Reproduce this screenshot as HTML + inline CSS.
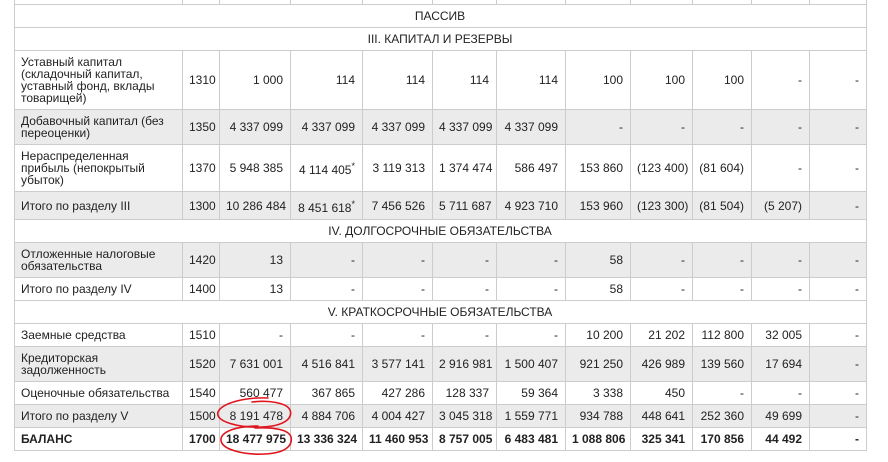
<!DOCTYPE html>
<html><head><meta charset="utf-8"><style>
body{margin:0;background:#fff;width:888px;height:462px;overflow:hidden;position:relative;font-family:"Liberation Sans",Arial,sans-serif;font-size:12px;color:#222}
table{position:absolute;left:14px;top:-20px;border-collapse:collapse;table-layout:fixed;width:853px}
td{border:1px solid #ccc;padding:0 7px 0 6px;text-align:right;line-height:12px;vertical-align:middle;overflow:hidden;white-space:nowrap}
td:first-child{text-align:left;white-space:normal;padding-left:6px}
td.c{text-align:center}
td.h{text-align:center}
tr.g td{background:#ebebeb}
tr.b td{font-weight:bold}
sup{font-size:9px;line-height:0}
td.s{padding-top:4px}
</style></head><body>
<table>
<colgroup><col style="width:168px"><col style="width:37px"><col style="width:71px"><col style="width:72px"><col style="width:70px"><col style="width:64px"><col style="width:69px"><col style="width:65px"><col style="width:62px"><col style="width:59px"><col style="width:58px"><col style="width:57px"></colgroup>
<tr style="height:24px"><td></td><td></td><td></td><td></td><td></td><td></td><td></td><td></td><td></td><td></td><td></td><td></td></tr>
<tr style="height:23px"><td colspan="12" class="h">ПАССИВ</td></tr>
<tr style="height:23px"><td colspan="12" class="h">III. КАПИТАЛ И РЕЗЕРВЫ</td></tr>
<tr style="height:59px"><td>Уставный капитал (складочный капитал, уставный фонд, вклады товарищей)</td><td>1310</td><td>1 000</td><td>114</td><td>114</td><td>114</td><td>114</td><td>100</td><td>100</td><td>100</td><td>-</td><td>-</td></tr>
<tr class="g" style="height:35px"><td>Добавочный капитал (без переоценки)</td><td>1350</td><td>4 337 099</td><td>4 337 099</td><td>4 337 099</td><td>4 337 099</td><td>4 337 099</td><td>-</td><td>-</td><td>-</td><td>-</td><td>-</td></tr>
<tr style="height:47px"><td>Нераспределенная прибыль (непокрытый убыток)</td><td>1370</td><td>5 948 385</td><td class="s">4 114 405<sup>*</sup></td><td>3 119 313</td><td>1 374 474</td><td>586 497</td><td>153 860</td><td>(123 400)</td><td>(81 604)</td><td>-</td><td>-</td></tr>
<tr class="g" style="height:28px"><td>Итого по разделу III</td><td>1300</td><td>10 286 484</td><td class="s">8 451 618<sup>*</sup></td><td>7 456 526</td><td>5 711 687</td><td>4 923 710</td><td>153 960</td><td>(123 300)</td><td>(81 504)</td><td>(5 207)</td><td>-</td></tr>
<tr style="height:23px"><td colspan="12" class="h">IV. ДОЛГОСРОЧНЫЕ ОБЯЗАТЕЛЬСТВА</td></tr>
<tr class="g" style="height:35px"><td>Отложенные налоговые обязательства</td><td>1420</td><td>13</td><td>-</td><td>-</td><td>-</td><td>-</td><td>58</td><td>-</td><td>-</td><td>-</td><td>-</td></tr>
<tr style="height:23px"><td>Итого по разделу IV</td><td>1400</td><td>13</td><td>-</td><td>-</td><td>-</td><td>-</td><td>58</td><td>-</td><td>-</td><td>-</td><td>-</td></tr>
<tr style="height:23px"><td colspan="12" class="h">V. КРАТКОСРОЧНЫЕ ОБЯЗАТЕЛЬСТВА</td></tr>
<tr style="height:23px"><td>Заемные средства</td><td>1510</td><td>-</td><td>-</td><td>-</td><td>-</td><td>-</td><td>10 200</td><td>21 202</td><td>112 800</td><td>32 005</td><td>-</td></tr>
<tr class="g" style="height:35px"><td>Кредиторская задолженность</td><td>1520</td><td>7 631 001</td><td>4 516 841</td><td>3 577 141</td><td>2 916 981</td><td>1 500 407</td><td>921 250</td><td>426 989</td><td>139 560</td><td>17 694</td><td>-</td></tr>
<tr style="height:23px"><td>Оценочные обязательства</td><td>1540</td><td>560 477</td><td>367 865</td><td>427 286</td><td>128 337</td><td>59 364</td><td>3 338</td><td>450</td><td>-</td><td>-</td><td>-</td></tr>
<tr class="g" style="height:23px"><td>Итого по разделу V</td><td>1500</td><td>8 191 478</td><td>4 884 706</td><td>4 004 427</td><td>3 045 318</td><td>1 559 771</td><td>934 788</td><td>448 641</td><td>252 360</td><td>49 699</td><td>-</td></tr>
<tr class="b" style="height:23px"><td>БАЛАНС</td><td>1700</td><td>18 477 975</td><td>13 336 324</td><td>11 460 953</td><td>8 757 005</td><td>6 483 481</td><td>1 088 806</td><td>325 341</td><td>170 856</td><td>44 492</td><td>-</td></tr>
</table>
<svg width="888" height="462" style="position:absolute;left:0;top:0" fill="none" stroke="#e0141e" stroke-width="1.6" stroke-linecap="round">
<path d="M268 398 C245 397 222 403 218 412 C215 422 240 428 262 427 C285 426 293 418 290 410 C287 403 270 400 252 402"/>
<path d="M258 426 C238 426 222 431 221 439 C220 450 245 455 265 454 C285 453 293 446 291 437 C289 430 275 427 255 428"/>
</svg>
</body></html>
